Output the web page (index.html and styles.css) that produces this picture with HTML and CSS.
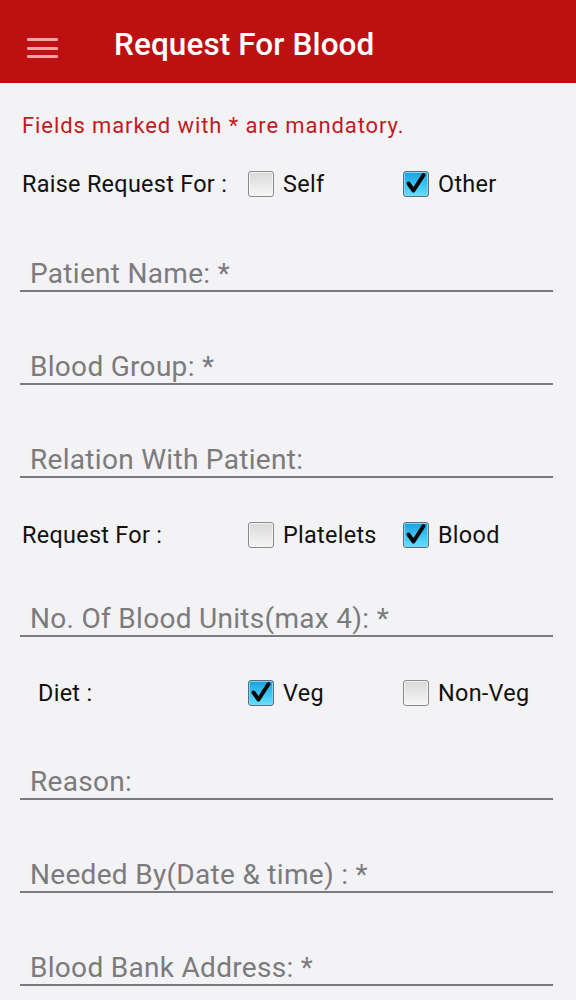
FILE: index.html
```html
<!DOCTYPE html>
<html>
<head>
<meta charset="utf-8">
<link rel="stylesheet" href="styles.css">
</head>
<body>
<header class="appbar">
  <div class="menu"><span></span><span></span><span></span></div>
  <h1 class="title">Request For Blood</h1>
</header>
<main class="form">
  <p class="notice">Fields marked with * are mandatory.</p>

  <div class="choice raise">
    <span class="label">Raise Request For :</span>
    <span class="opt"><span class="box"></span>Self</span>
    <span class="opt"><span class="box on"><svg viewBox="0 0 26 26"><path d="M5.5 12.5 L10.5 19.5 L20.5 4"/></svg></span>Other</span>
  </div>

  <div class="field f-first">Patient Name: *</div>
  <div class="field">Blood Group: *</div>
  <div class="field">Relation With Patient:</div>

  <div class="choice req">
    <span class="label">Request For :</span>
    <span class="opt"><span class="box"></span>Platelets</span>
    <span class="opt"><span class="box on"><svg viewBox="0 0 26 26"><path d="M5.5 12.5 L10.5 19.5 L20.5 4"/></svg></span>Blood</span>
  </div>

  <div class="field f-units">No. Of Blood Units(max 4): *</div>

  <div class="choice diet">
    <span class="label indent">Diet :</span>
    <span class="opt"><span class="box on"><svg viewBox="0 0 26 26"><path d="M5.5 12.5 L10.5 19.5 L20.5 4"/></svg></span>Veg</span>
    <span class="opt"><span class="box"></span>Non-Veg</span>
  </div>

  <div class="field f-reason">Reason:</div>
  <div class="field">Needed By(Date &amp; time) : *</div>
  <div class="field">Blood Bank Address: *</div>
</main>
</body>
</html>
```
FILE: styles.css
```css
* { box-sizing: border-box; }
html, body { margin: 0; padding: 0; }
body {
  width: 576px;
  height: 1000px;
  overflow: hidden;
  background: #f3f2f5;
  font-family: Roboto, "Noto Sans", sans-serif;
  color: #111;
}
.appbar {
  height: 83px;
  background: #bd1111;
  display: flex;
  align-items: center;
}
.menu {
  width: 31px;
  margin-left: 27px;
  margin-top: 13px;
  display: flex;
  flex-direction: column;
  gap: 5.7px;
}
.menu span {
  display: block;
  height: 3px;
  background: #f7a3a3;
  border-radius: 1px;
}
.title {
  margin: 0 0 0 56px;
  padding-top: 6px;
  font-size: 31.5px;
  font-weight: 500;
  color: #fff;
  letter-spacing: 0.1px;
}
.form {
  padding: 0 23px 0 20px;
  display: flex;
  flex-direction: column;
}
.notice {
  margin: 28px 0 0 2px;
  height: 30px;
  line-height: 30px;
  font-size: 22px;
  letter-spacing: 0.9px;
  color: #c21a1c;
}
.choice {
  display: grid;
  grid-template-columns: 226px 155px auto;
  align-items: center;
  height: 40px;
  margin-left: 2px;
  font-size: 23.4px;
  letter-spacing: 0.3px;
  color: #111;
}
.raise { margin-top: 23px; }
.req { margin-top: 37px; }
.diet { margin-top: 36px; }
.label.indent { padding-left: 16px; }
.opt {
  display: flex;
  align-items: center;
  gap: 9px;
}
.box {
  width: 26px;
  height: 26px;
  border: 1.5px solid #8a8a8a;
  border-radius: 3px;
  background: linear-gradient(#d9d9d9, #f6f6f6);
  box-shadow: inset 0 0 0 1px #f4f4f4;
  flex: none;
  display: flex;
}
.box.on {
  border-color: #5a6f7a;
  background: linear-gradient(#1a9fe0, #3fcaf6 60%, #6ddcff);
  box-shadow: inset 0 0 0 1px #7ad6f6;
}
.box svg {
  width: 100%;
  height: 100%;
  margin: -1.5px;
  width: 26px;
  height: 26px;
}
.box path {
  fill: none;
  stroke: #050505;
  stroke-width: 4;
  stroke-linecap: round;
  stroke-linejoin: round;
}
.field {
  height: 50px;
  padding-top: 14px;
  line-height: 36px;
  padding-left: 10px;
  font-size: 28px;
  letter-spacing: 0.3px;
  color: #7b7b7d;
  border-bottom: 2px solid #7b7b7d;
  margin-top: 43px;
}
.f-first { margin-top: 38px; }
.f-units { margin-top: 32px; }
.f-reason { margin-top: 37px; }
```
